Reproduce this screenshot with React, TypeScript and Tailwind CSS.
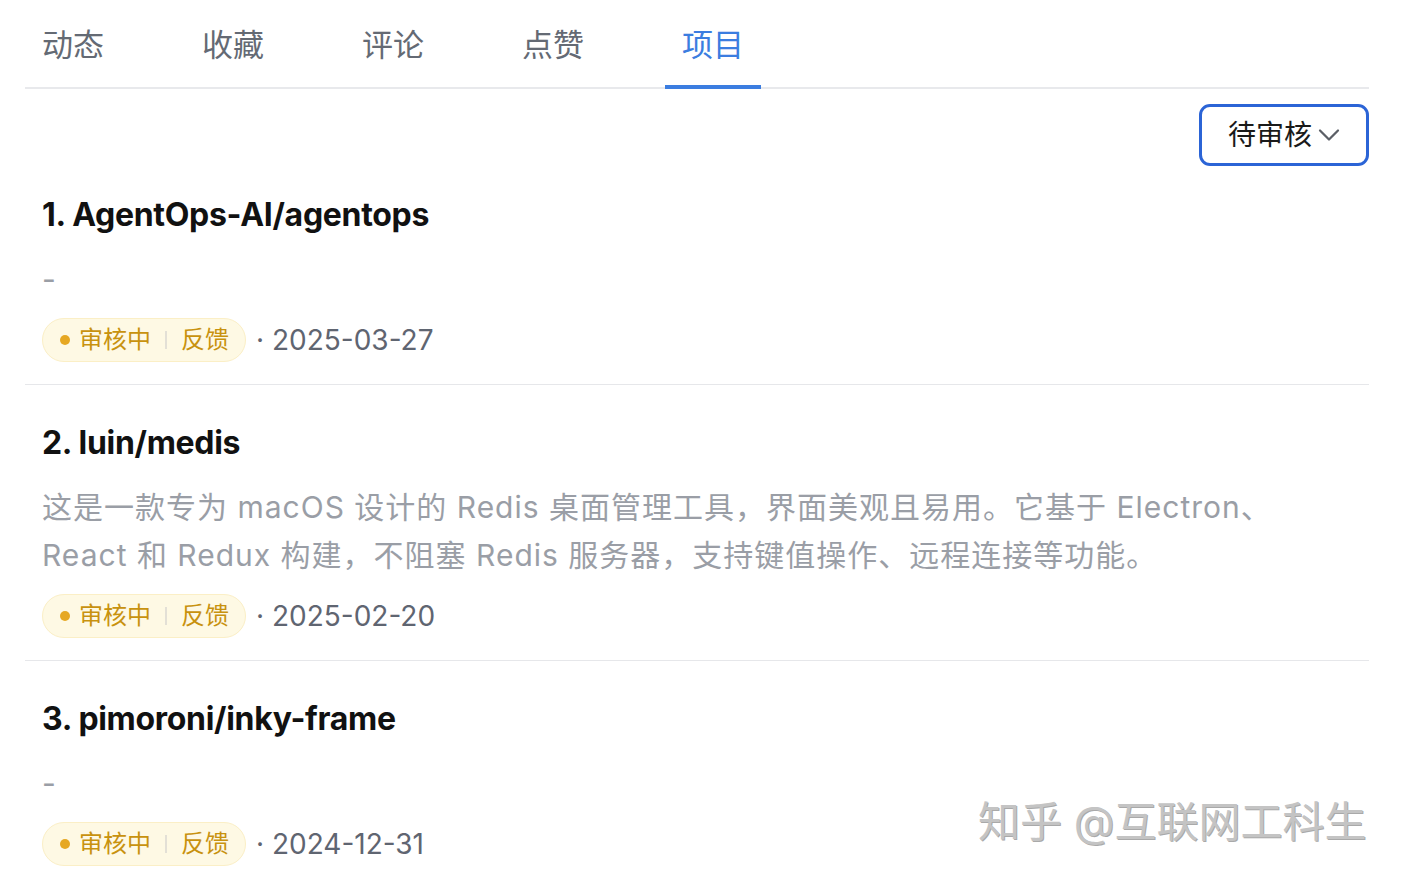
import React from 'react'
import { ChevronDown } from 'lucide-react'

type Project = {
  id: number
  name: string
  desc?: string
  date: string
}

const projects: Project[] = [
  { id: 1, name: 'AgentOps-AI/agentops', date: '2025-03-27' },
  {
    id: 2,
    name: 'luin/medis',
    desc: '这是一款专为 macOS 设计的 Redis 桌面管理工具，界面美观且易用。它基于 Electron、React 和 Redux 构建，不阻塞 Redis 服务器，支持键值操作、远程连接等功能。',
    date: '2025-02-20',
  },
  { id: 3, name: 'pimoroni/inky-frame', date: '2024-12-31' },
]

const tabs = ['动态', '收藏', '评论', '点赞', '项目']

const font = { fontFamily: 'Inter, "Noto Sans CJK SC", sans-serif' }

// ─── Status pill ─────────────────────────────────────────────────────────────
const StatusBadge: React.FC = () => (
  <span className="inline-flex items-center h-[44px] pl-[17px] pr-[16px] rounded-full bg-[#fef9e4] border border-[#fbefc6] text-[24px] text-[#c8920f]">
    <span className="w-[10px] h-[10px] rounded-full bg-[#e6a823] mr-[9px]" />
    <span>审核中</span>
    <span className="mx-[14px] w-[2px] h-[18px] bg-[#e3e0d6]" />
    <span>反馈</span>
  </span>
)

// ─── Row ─────────────────────────────────────────────────────────────────────
const ProjectRow: React.FC<{ project: Project; first?: boolean }> = ({ project, first }) => (
  <article className={`${first ? 'pt-[29px]' : 'pt-[38px] border-t border-[#e6e7ea]'} pb-[22px] pl-[17px]`}>
    <h3 className="text-[32px] leading-[40px] font-bold text-[#111111] tracking-[-0.3px]">
      {project.id}. {project.name}
    </h3>
    <p className="mt-[20px] pr-[70px] text-[30px] leading-[48px] tracking-[1px] text-[#9a9ea6]">
      {project.desc ?? '-'}
    </p>
    <div className="mt-[15px] flex items-center">
      <StatusBadge />
      <span className="ml-[10px] text-[28px] text-[#5f6571]">· {project.date}</span>
    </div>
  </article>
)

export default function App() {
  return (
    <div className="relative w-[1402px] h-[882px] overflow-hidden bg-white" style={font}>
      <div className="ml-[25px] w-[1344px]">
        {/* Tabs */}
        <nav className="flex h-[89px] border-b-2 border-[#e8e9ec] pl-[17px]">
          {tabs.map((t) => {
            const active = t === '项目'
            return (
              <div
                key={t}
                className={`relative w-[160px] flex items-start pt-[24px] text-[31px] leading-[42px] ${
                  active ? 'text-[#3b7de0]' : 'text-[#646a74]'
                }`}
              >
                {t}
                {active && <span className="absolute left-[-17px] bottom-[-2px] w-[96px] h-[4px] bg-[#3b7de0]" />}
              </div>
            )
          })}
        </nav>

        {/* Filter */}
        <div className="flex justify-end pt-[15px]">
          <button className="flex items-center h-[62px] w-[170px] pl-[26px] border-[3px] border-[#2b64d6] rounded-[11px] text-[28px] text-[#1a1a1a]">
            待审核
            <ChevronDown size={36} strokeWidth={1.5} className="-ml-[1px] text-[#5b5f66]" />
          </button>
        </div>

        {/* List */}
        <div>
          {projects.map((p, i) => (
            <ProjectRow key={p.id} project={p} first={i === 0} />
          ))}
        </div>
      </div>

      {/* Watermark */}
      <div
        className="absolute left-[978px] top-[796px] text-[42px] leading-[52px] text-[#c4c4c4]"
        style={{ textShadow: '1px 1px 0 #a9a9a9, -1px -1px 0 #ffffff' }}
      >
        知乎 @互联网工科生
      </div>
    </div>
  )
}
